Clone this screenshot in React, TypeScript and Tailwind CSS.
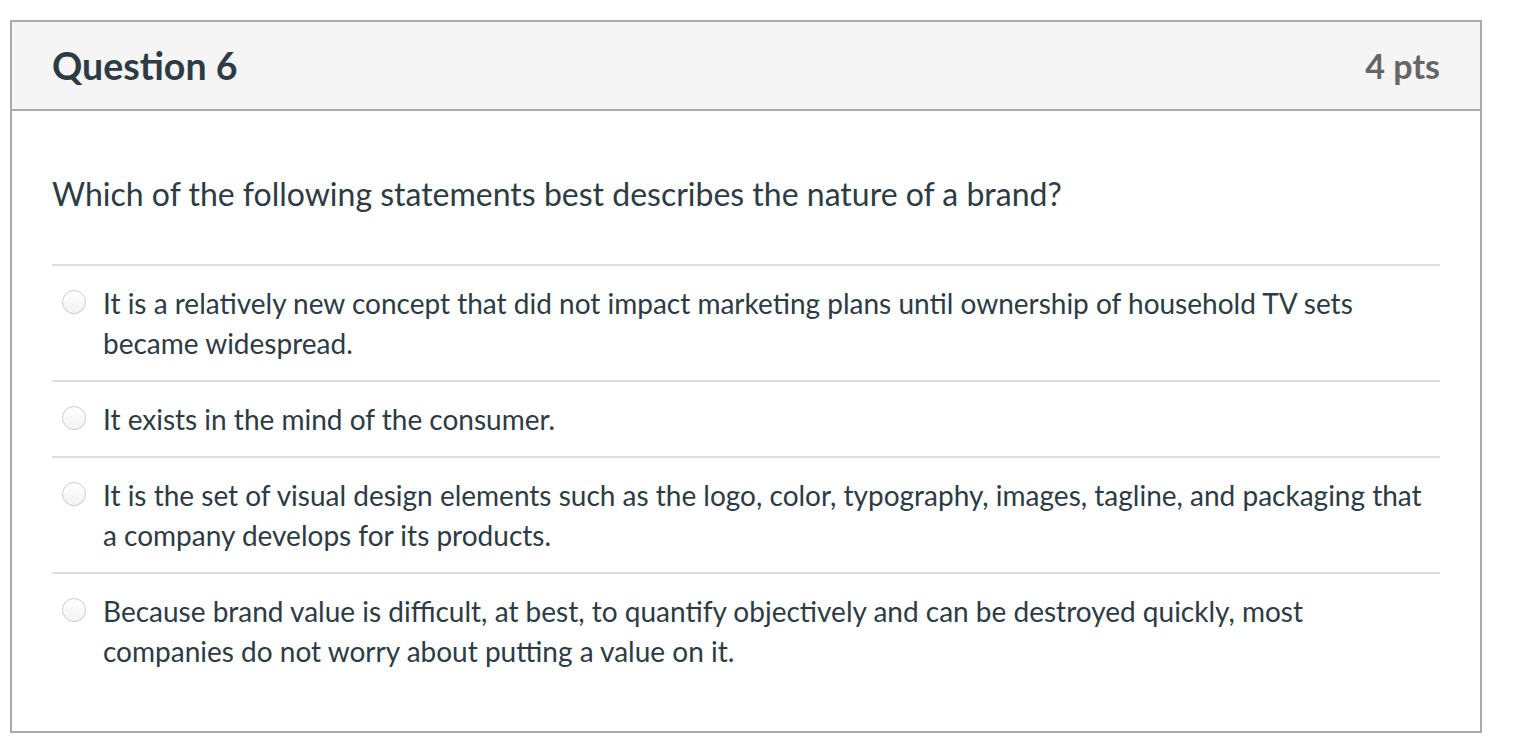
import React from 'react';

const answers = [
  'It is a relatively new concept that did not impact marketing plans until ownership of household TV sets became widespread.',
  'It exists in the mind of the consumer.',
  'It is the set of visual design elements such as the logo, color, typography, images, tagline, and packaging that a company develops for its products.',
  'Because brand value is difficult, at best, to quantify objectively and can be destroyed quickly, most companies do not worry about putting a value on it.',
];

const Radio: React.FC = () => (
  <span className="mt-[7px] ml-[10px] block h-[24px] w-[24px] shrink-0 rounded-full border border-[#cdcdcd] bg-gradient-to-b from-white to-[#f3f3f3] shadow-[0_1px_1px_rgba(0,0,0,0.05)]" />
);

const App: React.FC = () => {
  return (
    <div className="min-h-screen bg-white pt-[20px] pl-[10px] font-['Lato','Noto_Sans',sans-serif] text-[#2d3b45]">
      <div className="w-[1472px] border-2 border-[#aaaaaa]">
        <div className="flex h-[89px] items-center justify-between border-b-2 border-[#aaaaaa] bg-[#f5f5f5] px-[40px]">
          <h2 className="text-[37.5px] font-bold leading-none">Question 6</h2>
          <span className="text-[34px] font-bold leading-none text-[#666666]">4 pts</span>
        </div>
        <div className="px-[40px] pt-[63px] pb-[43px]">
          <p className="mb-[50px] text-[32px] leading-[40px]">
            Which of the following statements best describes the nature of a brand?
          </p>
          {answers.map((a, i) => (
            <div key={i} className="flex gap-[17px] border-t-2 border-[#dddddd] py-[17px]">
              <Radio />
              <span className="text-[28px] leading-[40px]">{a}</span>
            </div>
          ))}
        </div>
      </div>
    </div>
  );
};

export default App;
